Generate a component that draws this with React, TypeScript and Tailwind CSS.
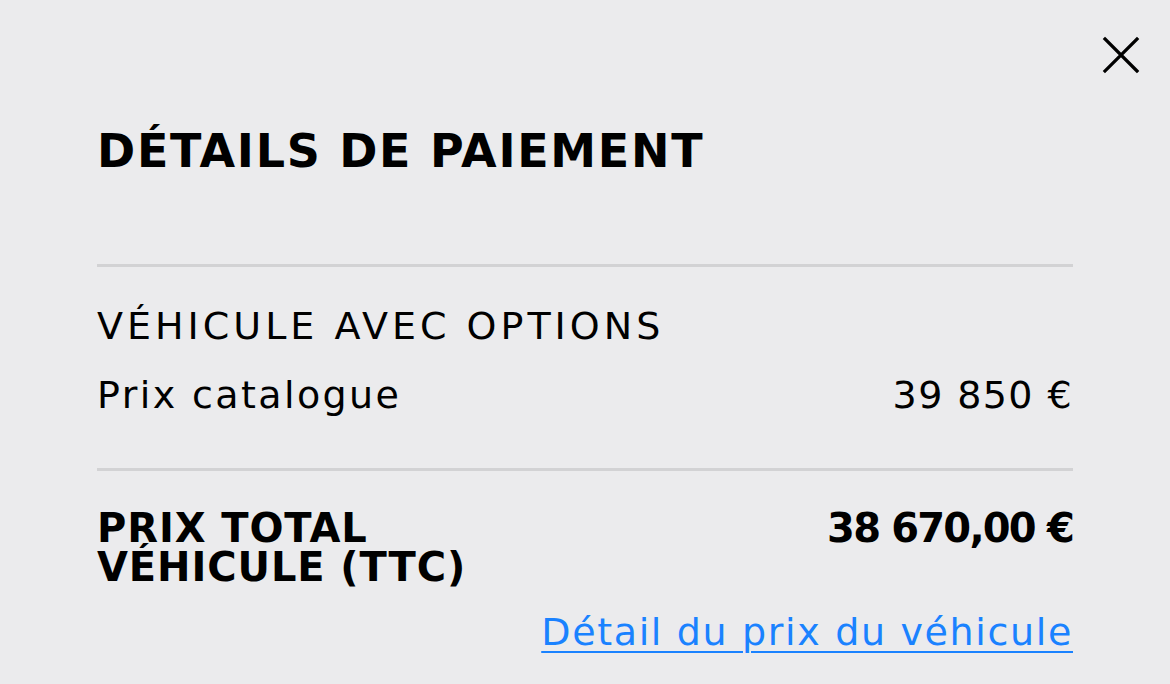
import React from "react";

const X = () => (
  <svg width="40" height="40" viewBox="0 0 40 40" fill="none" stroke="#000" strokeWidth="3.2" strokeLinecap="square">
    <path d="M4 4 L36 36 M36 4 L4 36" />
  </svg>
);

export default function App() {
  return (
    <div className="w-[1170px] h-[684px] bg-[#ebebed] text-black font-['DejaVu_Sans',sans-serif] overflow-hidden">
      <div className="flex justify-end pt-[35px] pr-[29px]">
        <button className="w-[40px] h-[40px]">
          <X />
        </button>
      </div>
      <div className="px-[97px]">
        <h1 className="mt-[46px] text-[46px] leading-[60px] font-bold tracking-[1.7px]">DÉTAILS DE PAIEMENT</h1>
        <div className="mt-[83px] h-[3px] bg-[#d2d2d4]" />
        <div className="pt-[34px] text-[38px] leading-[50px] tracking-[4px]">VÉHICULE AVEC OPTIONS</div>
        <div className="mt-[19px] flex justify-between text-[38px] leading-[50px] tracking-[2.4px]">
          <span>Prix catalogue</span>
          <span className="tracking-[1.4px]">39 850 €</span>
        </div>
        <div className="mt-[48px] h-[3px] bg-[#d2d2d4]" />
        <div className="mt-[38px] flex justify-between items-start font-bold text-[40px] leading-[39px] tracking-[0.9px]">
          <span>
            PRIX TOTAL
            <br />
            VÉHICULE (TTC)
          </span>
          <span className="tracking-[-1.8px]">38 670,00 €</span>
        </div>
        <div className="mt-[20px] flex justify-end">
          <a href="#" className="text-[#1a82ff] text-[38px] leading-[50px] tracking-[1.65px] underline underline-offset-[6px] decoration-2">
            Détail du prix du véhicule
          </a>
        </div>
      </div>
    </div>
  );
}
